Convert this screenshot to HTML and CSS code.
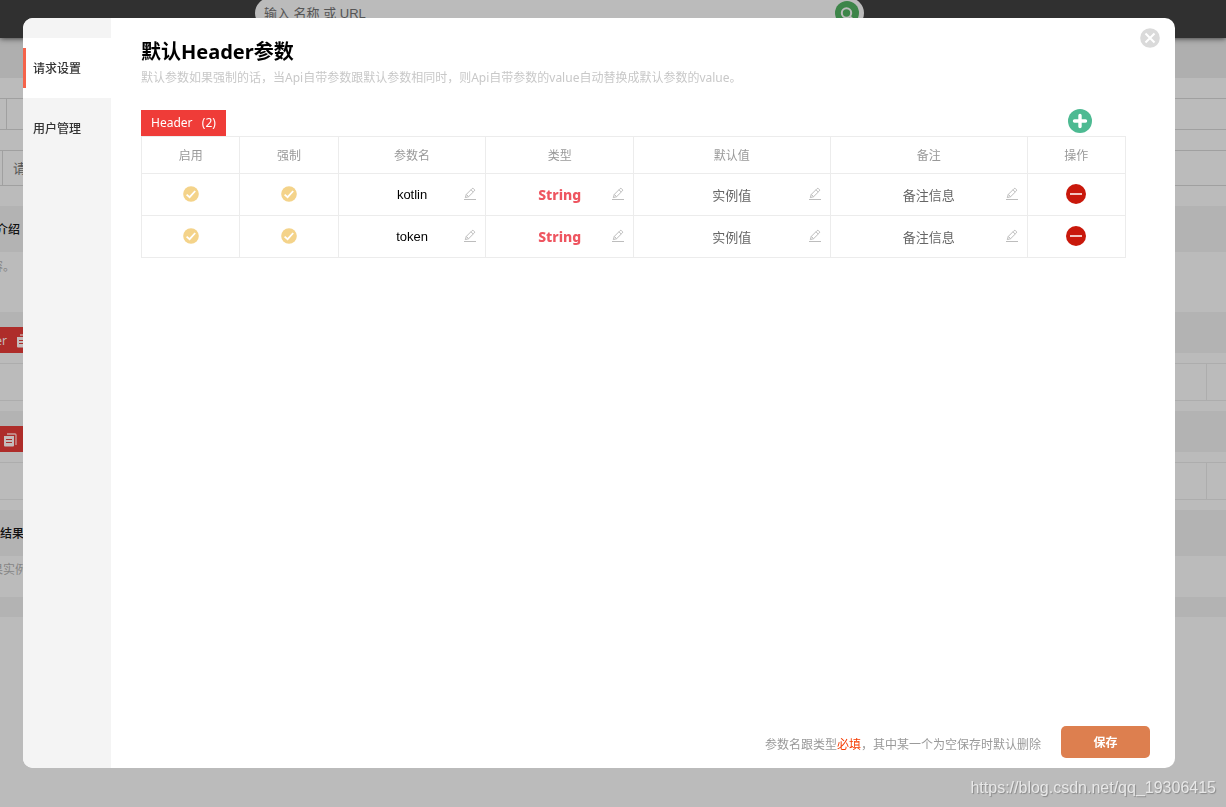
FILE: index.html
```html
<!DOCTYPE html>
<html lang="zh-CN">
<head>
<meta charset="utf-8">
<title>默认Header参数</title>
<link rel="stylesheet" href="styles.css">
</head>
<body>
<svg class="sprite" aria-hidden="true">
  <symbol id="tick" viewBox="0 0 16 16"><circle cx="8" cy="8" r="7.800" fill="#f4d38a"/><path d="M3.600 8.600 6.600 11.200 12.200 5" fill="none" stroke="#fff" stroke-width="1.800"/></symbol>
  <symbol id="pencil" viewBox="0 0 14 14"><path d="M1 12.500h12" fill="none" stroke="#bdbdbd" stroke-width="1"/><path d="M2.300 10.600 3.300 7.400 9 1.700Q9.800 1 10.600 1.700L11.300 2.400Q12 3.200 11.300 4L5.600 9.700ZM8 2.800 10.200 5M3.300 7.400 5.500 9.600" fill="none" stroke="#bdbdbd" stroke-width="1"/></symbol>
  <symbol id="minus" viewBox="0 0 20 20"><circle cx="10" cy="10" r="10" fill="#c9180b"/><path d="M4 10h12" stroke="#f3c5c0" stroke-width="2"/></symbol>
  <symbol id="copy" viewBox="0 0 13 14"><path d="M3 1h8q1 0 1 1v10" fill="none" stroke="#c8a19f" stroke-width="1.300"/><path d="M0 3h10v9.500q0 1-1 1H1q-1 0-1-1z" fill="#c4bcbb"/><path d="M2 6.500h6M2 9.500h6" stroke="#ae2d2a"/></symbol>
</svg>

<div class="page">
  <header class="topbar">
    <form class="search">
      <input class="search-input" type="text" placeholder="输入 名称 或 URL" aria-label="搜索">
      <button class="search-button" type="button" aria-label="搜索">
        <svg width="24" height="24" viewBox="0 0 24 24"><circle cx="12" cy="12" r="12" fill="#3d8549"/><circle cx="11.500" cy="12" r="4.700" fill="none" stroke="#bbb" stroke-width="2"/><path d="m15 15.500 3 3" stroke="#bbb" stroke-width="2"/></svg>
      </button>
    </form>
  </header>
  <div class="band band-top"></div>
  <div class="line line-short"><span class="stub stub-wide"></span></div>
  <div class="line line-tall"><span class="stub"></span><span class="stub-text">请</span></div>
  <h2 class="band band-title intro">介绍</h2>
  <p class="note note-intro">容。</p>
  <div class="band band-tab"><div class="chip chip-wide">er<svg width="13" height="14"><use href="#copy"/></svg></div></div>
  <div class="grid-row"><span></span><span></span></div>
  <div class="band band-tab"><div class="chip"><svg width="13" height="14"><use href="#copy"/></svg></div></div>
  <div class="grid-row"><span></span><span></span></div>
  <h2 class="band band-title">结果</h2>
  <p class="note note-result">果实例</p>
  <div class="band band-end"></div>
</div>

<div class="overlay">
  <div class="modal" role="dialog" aria-modal="true" aria-labelledby="title">
    <nav class="side">
      <a class="side-item active" href="#request"><span>请求设置</span></a>
      <a class="side-item" href="#users"><span>用户管理</span></a>
    </nav>
    <main class="content">
      <h1 class="title" id="title">默认Header参数</h1>
      <p class="subtitle">默认参数如果强制的话，当Api自带参数跟默认参数相同时，则Api自带参数的value自动替换成默认参数的value。</p>
      <div class="tabs">
        <span class="tab">Header&nbsp;&nbsp; (2)</span>
        <button class="icon-button" type="button" aria-label="添加">
          <svg width="24" height="24" viewBox="0 0 24 24"><circle cx="12" cy="12" r="12" fill="#4dba92"/><path d="M12 6.500v11M6.500 12h11" stroke="#fff" stroke-width="3.400" stroke-linecap="round"/></svg>
        </button>
      </div>
      <table class="params">
        <colgroup><col class="w10"><col class="w10"><col class="w15"><col class="w15"><col class="w20"><col class="w20"><col class="w10"></colgroup>
        <thead>
          <tr><th>启用</th><th>强制</th><th>参数名</th><th>类型</th><th>默认值</th><th>备注</th><th>操作</th></tr>
        </thead>
        <tbody>
          <tr>
            <td><label class="check"><input type="checkbox" checked aria-label="启用"><svg width="16" height="16"><use href="#tick"/></svg></label></td>
            <td><label class="check"><input type="checkbox" checked aria-label="强制"><svg width="16" height="16"><use href="#tick"/></svg></label></td>
            <td><div class="field"><input class="name" type="text" value="kotlin" aria-label="参数名"><button class="edit" type="button" aria-label="编辑"><svg width="14" height="14"><use href="#pencil"/></svg></button></div></td>
            <td><div class="field"><input class="type" type="text" value="String" aria-label="类型"><button class="edit" type="button" aria-label="编辑"><svg width="14" height="14"><use href="#pencil"/></svg></button></div></td>
            <td><div class="field"><input type="text" value="实例值" aria-label="默认值"><button class="edit" type="button" aria-label="编辑"><svg width="14" height="14"><use href="#pencil"/></svg></button></div></td>
            <td><div class="field"><input type="text" value="备注信息" aria-label="备注"><button class="edit" type="button" aria-label="编辑"><svg width="14" height="14"><use href="#pencil"/></svg></button></div></td>
            <td><button class="remove" type="button" aria-label="删除"><svg width="20" height="20"><use href="#minus"/></svg></button></td>
          </tr>
          <tr>
            <td><label class="check"><input type="checkbox" checked aria-label="启用"><svg width="16" height="16"><use href="#tick"/></svg></label></td>
            <td><label class="check"><input type="checkbox" checked aria-label="强制"><svg width="16" height="16"><use href="#tick"/></svg></label></td>
            <td><div class="field"><input class="name" type="text" value="token" aria-label="参数名"><button class="edit" type="button" aria-label="编辑"><svg width="14" height="14"><use href="#pencil"/></svg></button></div></td>
            <td><div class="field"><input class="type" type="text" value="String" aria-label="类型"><button class="edit" type="button" aria-label="编辑"><svg width="14" height="14"><use href="#pencil"/></svg></button></div></td>
            <td><div class="field"><input type="text" value="实例值" aria-label="默认值"><button class="edit" type="button" aria-label="编辑"><svg width="14" height="14"><use href="#pencil"/></svg></button></div></td>
            <td><div class="field"><input type="text" value="备注信息" aria-label="备注"><button class="edit" type="button" aria-label="编辑"><svg width="14" height="14"><use href="#pencil"/></svg></button></div></td>
            <td><button class="remove" type="button" aria-label="删除"><svg width="20" height="20"><use href="#minus"/></svg></button></td>
          </tr>
        </tbody>
      </table>
      <footer class="footer">
        <p class="hint">参数名跟类型<span class="required">必填</span>，其中某一个为空保存时默认删除</p>
        <button class="save" type="button">保存</button>
      </footer>
    </main>
    <button class="close" type="button" aria-label="关闭">
      <svg width="20" height="20" viewBox="0 0 20 20"><circle cx="10" cy="10" r="9.800" fill="#dadada"/><path d="m5.500 5.500 9 9M14.500 5.500l-9 9" stroke="#fff" stroke-width="2"/></svg>
    </button>
  </div>
  <div class="watermark">https://blog.csdn.net/qq_19306415</div>
</div>
</body>
</html>
```
FILE: styles.css
```css
* { box-sizing: border-box; }
body {
  margin: 0;
  background: #bbb;
  font: 12px/20px "Noto Sans", "Noto Sans CJK SC", sans-serif;
  overflow: hidden;
}
h1, h2, p { margin: 0; }
svg { display: block; }
button { padding: 0; border: 0; background: none; font: inherit; cursor: pointer; }
input { font: inherit; }
.sprite { position: absolute; width: 0; height: 0; }

/* page behind the dialog */
.topbar {
  position: relative;
  height: 38px;
  padding: 0 362px 0 255px;
  background: #303030;
  box-shadow: 0 0 6px #222;
}
.search {
  display: flex;
  align-items: center;
  height: 30px;
  margin-top: -2px;
  padding: 0 5px 0 9px;
  border-radius: 15px;
  background: #bbb;
  float: left;
  width: 100%;
}
.search-input {
  flex: 1;
  padding: 2px 0 0;
  border: 0;
  outline: 0;
  background: none;
  font-family: "Liberation Sans", "Noto Sans CJK SC", sans-serif;
  font-size: 13px;
}
.search-input::placeholder { color: #555; }
.band { background: #b3b3b3; }
.band-top { height: 40px; background: #afafaf; }
.band-title {
  padding: 14px 0 12px;
  font-size: 12px;
  font-weight: 500;
  color: #111;
}
.intro { text-indent: -4px; }
.band-tab { padding-top: 15px; }
.band-end { height: 20px; }
.line {
  display: flex;
  margin: 20px 0;
  border: 1px solid #a0a0a0;
  border-width: 1px 0;
}
.line-short { height: 32px; }
.line-tall { height: 36px; align-items: center; }
.stub { align-self: stretch; width: 3px; border-right: 1px solid #a0a0a0; }
.stub-wide { width: 7px; }
.stub-text { padding-left: 10px; font-size: 13px; color: #555; }
.note { color: #858585; text-indent: -9px; }
.note-intro { height: 60px; padding-top: 5px; }
.note-result { height: 41px; padding-top: 4px; }
.chip {
  display: flex;
  align-items: center;
  justify-content: flex-end;
  gap: 10px;
  width: 27px;
  height: 26px;
  padding: 2px 10px 0 0;
  background: #ae2d2a;
  color: #c4bcbb;
}
.chip svg { flex: none; }
.chip-wide { width: 40px; }
.grid-row {
  display: grid;
  grid-template-columns: 1fr 20px;
  height: 38px;
  margin: 10px 0;
  border: 1px solid #adadad;
  border-width: 1px 0;
}
.grid-row span + span { border-left: 1px solid #adadad; }

/* dialog */
.overlay {
  position: fixed;
  inset: 0;
  display: flex;
  flex-direction: column;
  padding: 18px 0 0;
}
.modal {
  position: relative;
  flex: 1;
  display: flex;
  margin: 0 51px 0 23px;
  border-radius: 10px;
  background: #fff;
  overflow: hidden;
}
.side { width: 88px; padding-top: 20px; background: #f4f4f4; }
.side-item {
  display: flex;
  align-items: center;
  height: 60px;
  padding-left: 10px;
  color: #333;
  font-weight: 500;
  text-decoration: none;
}
.side-item span { padding-top: 2px; }
.active { padding-left: 0; background: #fff; }
.active::before {
  content: "";
  width: 3px;
  height: 40px;
  margin-right: 7px;
  background: #f5634a;
}
.content {
  flex: 1;
  display: flex;
  flex-direction: column;
  padding: 20px 25px 10px 30px;
}
.title { font-size: 20px; line-height: 28px; color: #000; }
.subtitle { margin-top: 2px; color: #c8c8c8; }
.tabs {
  display: flex;
  align-items: flex-end;
  justify-content: space-between;
  height: 27px;
  margin: 21px 24px 0 0;
  padding-right: 34px;
}
.tab {
  height: 26px;
  padding: 0 10px;
  background: #ef3c38;
  color: #fff;
  line-height: 26px;
}
.icon-button { margin-bottom: 3px; }
.params {
  width: calc(100% - 24px);
  table-layout: fixed;
  border-collapse: collapse;
}
.w10 { width: 10%; }
.w15 { width: 15%; }
.w20 { width: 20%; }
.params th, .params td { padding: 0; border: 1px solid #ececec; }
.params th { height: 37px; padding-top: 2px; color: #999; font-weight: 400; text-align: center; }
.params td { height: 42px; padding-bottom: 1px; }
.check { display: grid; place-items: center; }
.check input, .check svg { grid-area: 1 / 1; }
.check input { width: 16px; height: 16px; margin: 0; appearance: none; }
.check svg { pointer-events: none; }
.field { display: grid; align-items: center; }
.field input, .edit { grid-area: 1 / 1; }
.field input {
  width: 100%;
  height: 36px;
  padding: 0 24px;
  border: 0;
  outline: 0;
  background: none;
  color: #666;
  font-size: 13px;
  text-align: center;
}
.field .name {
  color: #000;
  font-family: "Liberation Sans", sans-serif;
}
.field .type { color: #ee5560; font-size: 14px; font-weight: 800; }
.edit { justify-self: end; margin-right: 8px; }
.remove { display: block; margin: 0 auto; }
.footer {
  display: flex;
  align-items: center;
  justify-content: flex-end;
  gap: 20px;
  margin-top: auto;
}
.hint { padding-top: 6px; color: #999; }
.required { color: #f53b00; }
.save {
  width: 89px;
  height: 32px;
  padding-top: 2px;
  border-radius: 5px;
  background: #dd7f4f;
  color: #fff;
  font-weight: 700;
}
.close { position: absolute; top: 10px; right: 15px; }
.watermark {
  height: 39px;
  padding-right: 10px;
  color: #e8e8e8;
  font: 16px/39px "Liberation Sans", sans-serif;
  text-align: right;
  text-shadow: 1px 1px 1px #888;
}
```
